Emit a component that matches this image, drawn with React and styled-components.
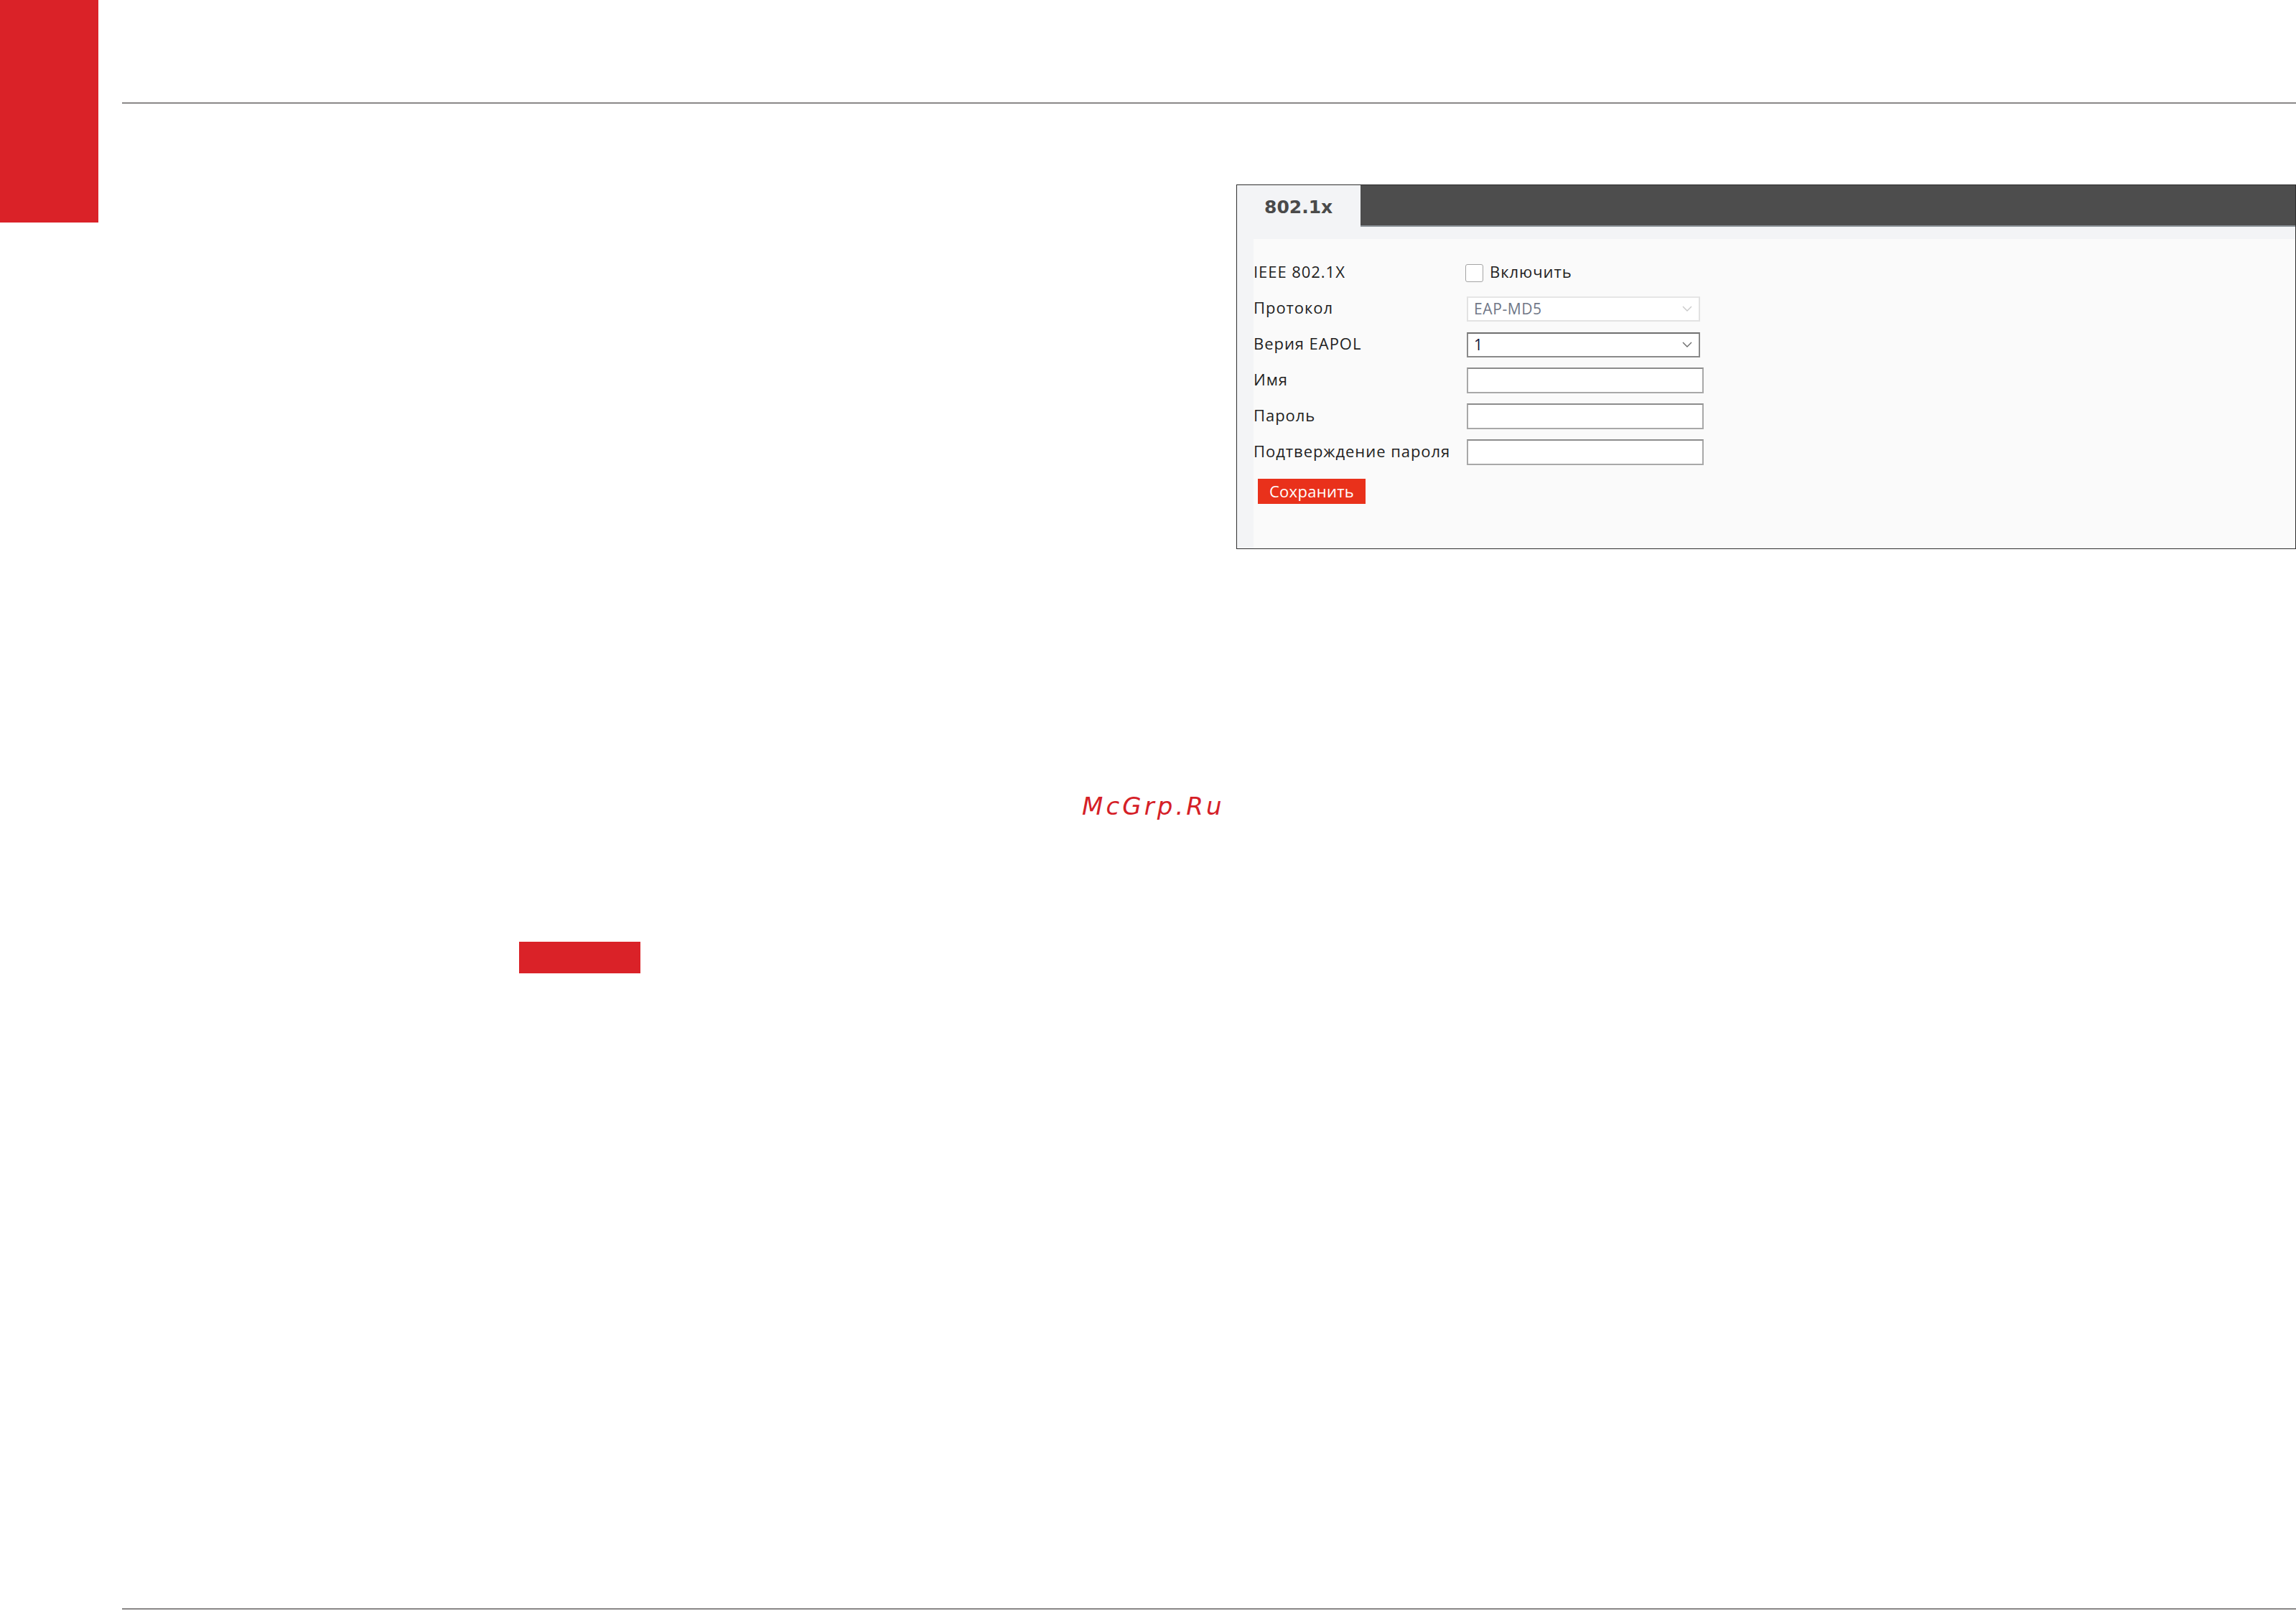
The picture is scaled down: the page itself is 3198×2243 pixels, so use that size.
import React from "react";
import styled, { createGlobalStyle } from "styled-components";

const GlobalStyle = createGlobalStyle`
  html, body {
    margin: 0;
    padding: 0;
    background: #fff;
  }
  * { box-sizing: border-box; }
`;

const rows = [
  { label: "IEEE 802.1X", kind: "check", text: "Включить" },
  { label: "Протокол", kind: "select", text: "EAP-MD5", disabled: true },
  { label: "Верия EAPOL", kind: "select", text: "1" },
  { label: "Имя", kind: "input" },
  { label: "Пароль", kind: "input" },
  { label: "Подтверждение пароля", kind: "input" },
];

function Chevron({ light }) {
  return (
    <svg width="14" height="8" viewBox="0 0 14 8">
      <path d="M1 1 L7 7 L13 1" fill="none" stroke={light ? "#c9c9c9" : "#6b6b6b"} strokeWidth="1.4" />
    </svg>
  );
}

function Field({ row }) {
  if (row.kind === "check") {
    return (
      <CheckWrap>
        <CheckBox />
        <CheckText>{row.text}</CheckText>
      </CheckWrap>
    );
  }
  if (row.kind === "select") {
    return (
      <SelectBox $disabled={row.disabled}>
        <SelectValue $disabled={row.disabled}>{row.text}</SelectValue>
        <Chevron light={row.disabled} />
      </SelectBox>
    );
  }
  return <TextBox />;
}

export default function App() {
  return (
    <>
      <GlobalStyle />
      <Page>
        <Rail>
          <RedBlock />
        </Rail>
        <Main>
          <TopRule />
          <PanelRow>
            <Panel>
              <TabBar>
                <Tab>802.1x</Tab>
                <TabFill />
              </TabBar>
              <Body>
                <Content>
                  <Form>
                    {rows.map((r) => (
                      <React.Fragment key={r.label}>
                        <Label>{r.label}</Label>
                        <Cell>
                          <Field row={r} />
                        </Cell>
                      </React.Fragment>
                    ))}
                  </Form>
                  <SaveButton>Сохранить</SaveButton>
                </Content>
              </Body>
            </Panel>
          </PanelRow>
          <Marker />
          <BottomRule />
        </Main>
        <Watermark>McGrp.Ru</Watermark>
      </Page>
    </>
  );
}

const Page = styled.div`
  position: relative;
  display: flex;
  width: 3198px;
  height: 2243px;
  overflow: hidden;
  background: #fff;
`;

const Rail = styled.div`
  width: 137px;
  flex-shrink: 0;
`;

const RedBlock = styled.div`
  height: 310px;
  background: #da2228;
`;

const Main = styled.div`
  flex: 1;
  margin-left: 33px;
  display: flex;
  flex-direction: column;
`;

const TopRule = styled.div`
  margin-top: 143px;
  height: 1px;
  background: #231f20;
`;

const PanelRow = styled.div`
  display: flex;
  justify-content: flex-end;
  margin-top: 113px;
`;

const Panel = styled.div`
  width: 1476px;
  height: 508px;
  border: 1px solid #2e2e2e;
  background: #f3f4f6;
  display: flex;
  flex-direction: column;
`;

const TabBar = styled.div`
  display: flex;
  height: 58px;
`;

const Tab = styled.div`
  width: 172px;
  padding-left: 38px;
  display: flex;
  align-items: center;
  background: #f3f4f6;
  color: #4a4a4a;
  font-family: "DejaVu Sans", sans-serif;
  font-weight: bold;
  font-size: 25px;
  padding-top: 2px;
`;

const TabFill = styled.div`
  flex: 1;
  background: #4d4d4d;
  border-bottom: 2px solid #8f969c;
`;

const Body = styled.div`
  flex: 1;
  display: flex;
  padding: 17px 0 0 23px;
`;

const Content = styled.div`
  flex: 1;
  background: #fafafa;
  padding-top: 22px;
  font-family: "Open Sans", "Noto Sans", sans-serif;
`;

const Form = styled.div`
  display: grid;
  grid-template-columns: 296px auto;
  grid-auto-rows: 50px;
`;

const Label = styled.div`
  display: flex;
  align-items: center;
  padding-bottom: 4px;
  font-size: 22px;
  letter-spacing: 0.95px;
  color: #1f1f1f;
  white-space: nowrap;
`;

const Cell = styled.div`
  display: flex;
  align-items: center;
`;

const CheckWrap = styled.div`
  display: flex;
  align-items: center;
  gap: 9px;
  margin-left: -1px;
`;

const CheckBox = styled.span`
  width: 25px;
  height: 25px;
  border: 1.5px solid #a4a4a4;
  border-radius: 3px;
  background: #fff;
`;

const CheckText = styled.span`
  font-size: 22px;
  letter-spacing: 0.95px;
  color: #1f1f1f;
  padding-bottom: 4px;
`;

const SelectBox = styled.div`
  width: 325px;
  height: 35px;
  margin-left: 1px;
  display: flex;
  align-items: center;
  justify-content: space-between;
  padding: 0 9px 0 8px;
  background: #fff;
  border: ${(p) => (p.$disabled ? "2px solid #e2e2e2" : "2px solid #8a8a8a")};
  border-top-color: ${(p) => (p.$disabled ? "#e6e6e6" : "#6f6f6f")};
`;

const SelectValue = styled.span`
  font-size: 21px;
  letter-spacing: 0.6px;
  color: ${(p) => (p.$disabled ? "#6f7787" : "#14143a")};
`;

const TextBox = styled.div`
  width: 330px;
  height: 36px;
  margin-left: 1px;
  background: #fff;
  border: 2px solid #a8a8a8;
  border-top-color: #8c8c8c;
`;

const SaveButton = styled.button`
  margin: 12px 0 0 6px;
  width: 150px;
  height: 35px;
  border: none;
  padding: 0 0 2px;
  background: #e9311b;
  color: #fff;
  font-family: "Open Sans", "Noto Sans", sans-serif;
  font-size: 22px;
  letter-spacing: 0.3px;
`;

const Marker = styled.div`
  margin: 547px 0 0 553px;
  width: 169px;
  height: 44px;
  background: #da2228;
`;

const BottomRule = styled.div`
  margin-top: auto;
  margin-bottom: 1px;
  height: 1px;
  background: #231f20;
`;

const Watermark = styled.div`
  position: absolute;
  left: 1507px;
  top: 1106px;
  font-family: "DejaVu Sans", sans-serif;
  font-style: italic;
  font-size: 34px;
  line-height: 34px;
  letter-spacing: 4.1px;
  color: #d52027;
`;
